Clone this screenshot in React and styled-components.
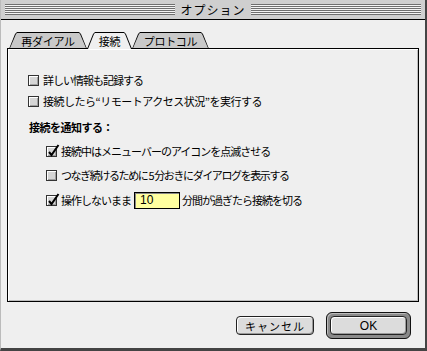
import styled, { createGlobalStyle } from "styled-components"

const Global = createGlobalStyle`
    html, body {
        margin: 0;
        padding: 0;
        background: #efefef;
    }
    body {
        font-family: "Noto Sans CJK JP", "Noto Sans", sans-serif;
        font-size: 11px;
        color: #000;
    }
`

const Ventana = styled.div`
    width: 427px;
    height: 351px;
    box-sizing: border-box;
    background: #efefef;
    border-left: 1px solid #bbb;
    border-right: 2px solid #444;
    border-bottom: 3px solid #444;
    display: flex;
    flex-direction: column;
`

const BarraTitulo = styled.div`
    height: 20px;
    box-sizing: border-box;
    background: #cfcfcf;
    border-bottom: 1px solid #000;
    padding: 4px 4px 0 4px;
`

const Rayas = styled.div`
    height: 11px;
    background: repeating-linear-gradient(to bottom, #6f6f6f 0 1px, #f4f4f4 1px 2px);
    display: flex;
    justify-content: center;
    align-items: center;
`

const Titulo = styled.span`
    background: #cfcfcf;
    padding: 0 5px;
    font-size: 12px;
    letter-spacing: 1px;
    line-height: 15px;
`

const Contenido = styled.div`
    flex: 1;
    padding: 12px 6px 0 6px;
    display: flex;
    flex-direction: column;
`

const Pestanas = styled.div`
    display: flex;
    align-items: flex-end;
    padding-left: 2px;
    margin-bottom: -1px;
    position: relative;
    z-index: 1;
`

const Pestana = styled.div`
    position: relative;
    isolation: isolate;
    width: ${p => p.$ancho}px;
    height: 17px;
    display: flex;
    justify-content: center;
    align-items: center;
    padding-top: 1px;
    box-sizing: border-box;
    font-size: 11px;
    letter-spacing: -0.3px;

    &::before {
        content: '';
        position: absolute;
        inset: 0;
        background: #000;
        clip-path: polygon(6px 2px, 8px 0, calc(100% - 8px) 0, calc(100% - 6px) 2px, 100% 100%, 0 100%);
        z-index: -1;
    }

    &::after {
        content: '';
        position: absolute;
        inset: ${p => p.$activa ? "1px 1px 0 1px" : "1px 1px 1px 1px"};
        background: ${p => p.$activa ? "#efefef" : "#c9c9c9"};
        clip-path: polygon(6px 1px, 7px 0, calc(100% - 7px) 0, calc(100% - 6px) 1px, 100% 100%, 0 100%);
        z-index: -1;
    }
`

const Panel = styled.div`
    height: 254px;
    box-sizing: border-box;
    border: 1px solid #000;
    box-shadow: inset 1px 1px 0 #fff, inset -1px -1px 0 #bdbdbd;
    background: #efefef;
    padding: 22px 0 0 20px;
    display: flex;
    flex-direction: column;
`

const Fila = styled.label`
    display: flex;
    align-items: center;
    height: 18px;
    white-space: pre;
    letter-spacing: ${p => p.$espaciado ?? -1}px;
    margin-left: ${p => p.$sangria ? 18 : 0}px;
    margin-bottom: ${p => p.$abajo ?? 6}px;
`

const Encabezado = styled.div`
    font-weight: bold;
    height: 18px;
    display: flex;
    align-items: center;
    margin: 2px 0 6px 1px;
    letter-spacing: -0.5px;
`

const Caja = styled.span`
    position: relative;
    width: 11px;
    height: 11px;
    flex: none;
    margin-right: 4px;
    box-sizing: border-box;
    border: 1px solid #333;
    background: #d6d6d6;
    box-shadow: inset 1px 1px 0 #fff, inset -1px -1px 0 #a0a0a0;

    svg {
        position: absolute;
        left: 0;
        top: -3px;
    }
`

const Campo = styled.span`
    width: 46px;
    height: 17px;
    flex: none;
    box-sizing: border-box;
    border: 1px solid #000;
    box-shadow: inset 1px 1px 0 #888;
    background: #ffffa0;
    display: flex;
    align-items: center;
    padding-left: 5px;
    font-family: "Liberation Sans", sans-serif;
    font-size: 12px;
    letter-spacing: 0;
    margin: 0 2px 0 3px;
`

const Botones = styled.div`
    display: flex;
    justify-content: flex-end;
    align-items: center;
    gap: 12px;
    padding: 10px 8px 0 0;
`

const Boton = styled.div`
    width: 78px;
    height: 19px;
    box-sizing: border-box;
    border: 1px solid #222;
    border-radius: 4px;
    background: #dcdcdc;
    box-shadow: inset 1px 1px 0 #fff, inset -1px -1px 0 #999;
    display: flex;
    justify-content: center;
    align-items: center;
    letter-spacing: 1px;
`

const Anillo = styled.div`
    padding: 3px;
    border: 1px solid #111;
    border-radius: 6px;
    background: #8a8a8a;
    box-shadow: inset 1px 1px 0 #bbb;

    ${Boton} {
        width: 77px;
        height: 19px;
        font-family: "Liberation Sans", sans-serif;
        font-size: 12px;
        letter-spacing: 0;
    }
`

function Casilla({ marcada }) {
    return (
        <Caja>
            {marcada && (
                <svg width="13" height="14" viewBox="0 0 13 14">
                    <path d="M2 8 L4.5 11 L11.5 1" stroke="#000" strokeWidth="2" fill="none" />
                </svg>
            )}
        </Caja>
    )
}

export default function App() {
    return (
        <>
            <Global />
            <Ventana>
                <BarraTitulo>
                    <Rayas>
                        <Titulo>オプション</Titulo>
                    </Rayas>
                </BarraTitulo>
                <Contenido>
                    <Pestanas>
                        <Pestana $ancho={78}>再ダイアル</Pestana>
                        <Pestana $ancho={45} $activa>接続</Pestana>
                        <Pestana $ancho={77}>プロトコル</Pestana>
                    </Pestanas>
                    <Panel>
                        <Fila $abajo={3}>
                            <Casilla />
                            詳しい情報も記録する
                        </Fila>
                        <Fila $espaciado={-0.5}>
                            <Casilla />
                            接続したら“リモートアクセス状況”を実行する
                        </Fila>
                        <Encabezado>接続を通知する：</Encabezado>
                        <Fila $sangria>
                            <Casilla marcada />
                            接続中はメニューバーのアイコンを点滅させる
                        </Fila>
                        <Fila $sangria $abajo={7} $espaciado={-1.4}>
                            <Casilla />
                            {"つなぎ続けるために 5 分おきにダイアログを表示する"}
                        </Fila>
                        <Fila $sangria>
                            <Casilla marcada />
                            操作しないまま<Campo>10</Campo>分間が過ぎたら接続を切る
                        </Fila>
                    </Panel>
                    <Botones>
                        <Boton>キャンセル</Boton>
                        <Anillo>
                            <Boton>OK</Boton>
                        </Anillo>
                    </Botones>
                </Contenido>
            </Ventana>
        </>
    )
}
